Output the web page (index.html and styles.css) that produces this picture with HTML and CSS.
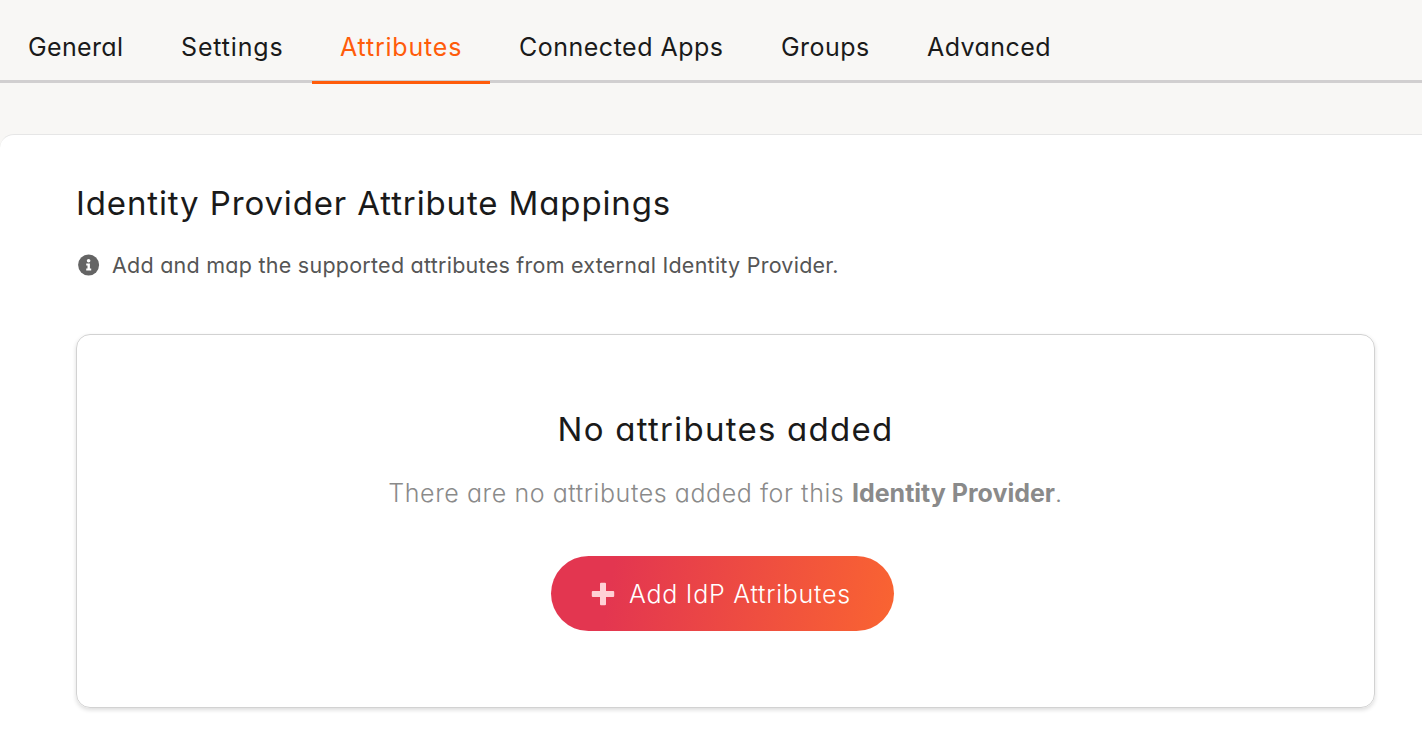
FILE: index.html
```html
<!DOCTYPE html>
<html lang="en">
<head>
<meta charset="utf-8">
<title>Identity Provider Attributes</title>
<link rel="stylesheet" href="styles.css">
</head>
<body>
<nav class="tabs">
  <a class="tab tab-general">General</a>
  <a class="tab tab-settings">Settings</a>
  <a class="tab tab-attributes active">Attributes</a>
  <a class="tab tab-apps">Connected Apps</a>
  <a class="tab tab-groups">Groups</a>
  <a class="tab tab-advanced">Advanced</a>
</nav>
<main class="panel">
  <h1 class="title">Identity Provider Attribute Mappings</h1>
  <p class="hint">
    <svg class="info-icon" viewBox="0 0 22 22" width="22" height="22" aria-hidden="true">
      <circle cx="10.600" cy="11" r="10.500" fill="#646464"/>
      <circle cx="10.600" cy="6.700" r="1.800" fill="#fff"/>
      <path d="M8.200 9.400h3.700v5h1.300v2H8.200v-2h1.300v-3H8.200z" fill="#fff"/>
    </svg>
    <span>Add and map the supported attributes from external Identity Provider.</span>
  </p>
  <section class="empty">
    <h2 class="empty-title">No attributes added</h2>
    <p class="empty-text">There are no attributes added for this <b>Identity Provider</b>.</p>
    <button class="add-button" type="button">
      <svg class="plus-icon" viewBox="0 0 24 24" width="24" height="24" aria-hidden="true">
        <path d="M10 .8h4a1 1 0 0 1 1 1V9h7.200a1 1 0 0 1 1 1v4a1 1 0 0 1-1 1H15v7.200a1 1 0 0 1-1 1h-4a1 1 0 0 1-1-1V15H1.800a1 1 0 0 1-1-1v-4a1 1 0 0 1 1-1H9V1.800a1 1 0 0 1 1-1z" fill="#ffd0d5"/>
      </svg>
      <span>Add IdP Attributes</span>
    </button>
  </section>
</main>
</body>
</html>
```
FILE: styles.css
```css
* {
  box-sizing: border-box;
}

body {
  margin: 0;
  height: 748px;
  overflow: hidden;
  display: flex;
  flex-direction: column;
  background: #f8f7f5;
  color: #1a1a1a;
  font-family: Inter, "Noto Sans", sans-serif;
  font-weight: 400;
  font-feature-settings: "cv11";
}

h1, h2, p {
  margin: 0;
  font-weight: inherit;
}

.tabs {
  flex: none;
  display: flex;
  height: 83px;
  padding-top: 14px;
  border-bottom: 3px solid #d1cfd0;
}

.tab {
  position: relative;
  padding-left: 28px;
  font-size: 25px;
  line-height: 66px;
  white-space: nowrap;
}

.tab-general { width: 153px; letter-spacing: 0.35px; }
.tab-settings { width: 159px; letter-spacing: 0.85px; }
.tab-attributes { width: 178px; letter-spacing: 0.8px; }
.tab-apps { width: 263px; padding-left: 29px; letter-spacing: 0.5px; }
.tab-groups { width: 145px; letter-spacing: 0.45px; }
.tab-advanced { padding-left: 29px; letter-spacing: 0.45px; }

.active {
  color: #ff5c0a;
}

.active::after {
  content: "";
  position: absolute;
  left: 0;
  right: 0;
  bottom: -4px;
  height: 3px;
  background: #ff5c0a;
}

.panel {
  flex: 1;
  margin-top: 51px;
  padding: 48px 47px 0 76px;
  border-top: 1px solid #e6e6e6;
  border-radius: 14px 0 0 0;
  background: #fff;
}

.title {
  font-size: 33px;
  line-height: 40px;
  letter-spacing: 0.87px;
}

.hint {
  display: flex;
  align-items: center;
  gap: 12px;
  margin-top: 27px;
  padding-left: 2px;
  color: #555;
  font-size: 21.5px;
  line-height: 30px;
  letter-spacing: 0.25px;
}

.info-icon {
  flex: none;
}

.empty {
  display: flex;
  flex-direction: column;
  align-items: center;
  height: 374px;
  margin-top: 54px;
  padding-top: 74px;
  border: 1px solid #d2d2d2;
  border-radius: 14px;
  box-shadow: 0 2px 4px rgba(0, 0, 0, 0.14);
}

.empty-title {
  font-size: 33px;
  line-height: 40px;
  letter-spacing: 1.25px;
}

.empty-text {
  margin-top: 29px;
  color: #8a8a8a;
  font-size: 25px;
  font-weight: 350;
  line-height: 30px;
  letter-spacing: 0.57px;
}

.empty-text b {
  font-weight: 650;
  letter-spacing: 0;
}

.add-button {
  display: flex;
  align-items: center;
  gap: 14px;
  width: 343px;
  height: 75px;
  margin: 48px 6px 0 0;
  padding: 0 0 0 40px;
  border: 0;
  border-radius: 38px;
  background: linear-gradient(100deg, #e33650 18%, #f96332 98%);
  color: #fff;
  font: inherit;
  font-size: 25px;
  font-weight: 350;
  font-feature-settings: inherit;
  letter-spacing: 0.75px;
  white-space: nowrap;
}
```
